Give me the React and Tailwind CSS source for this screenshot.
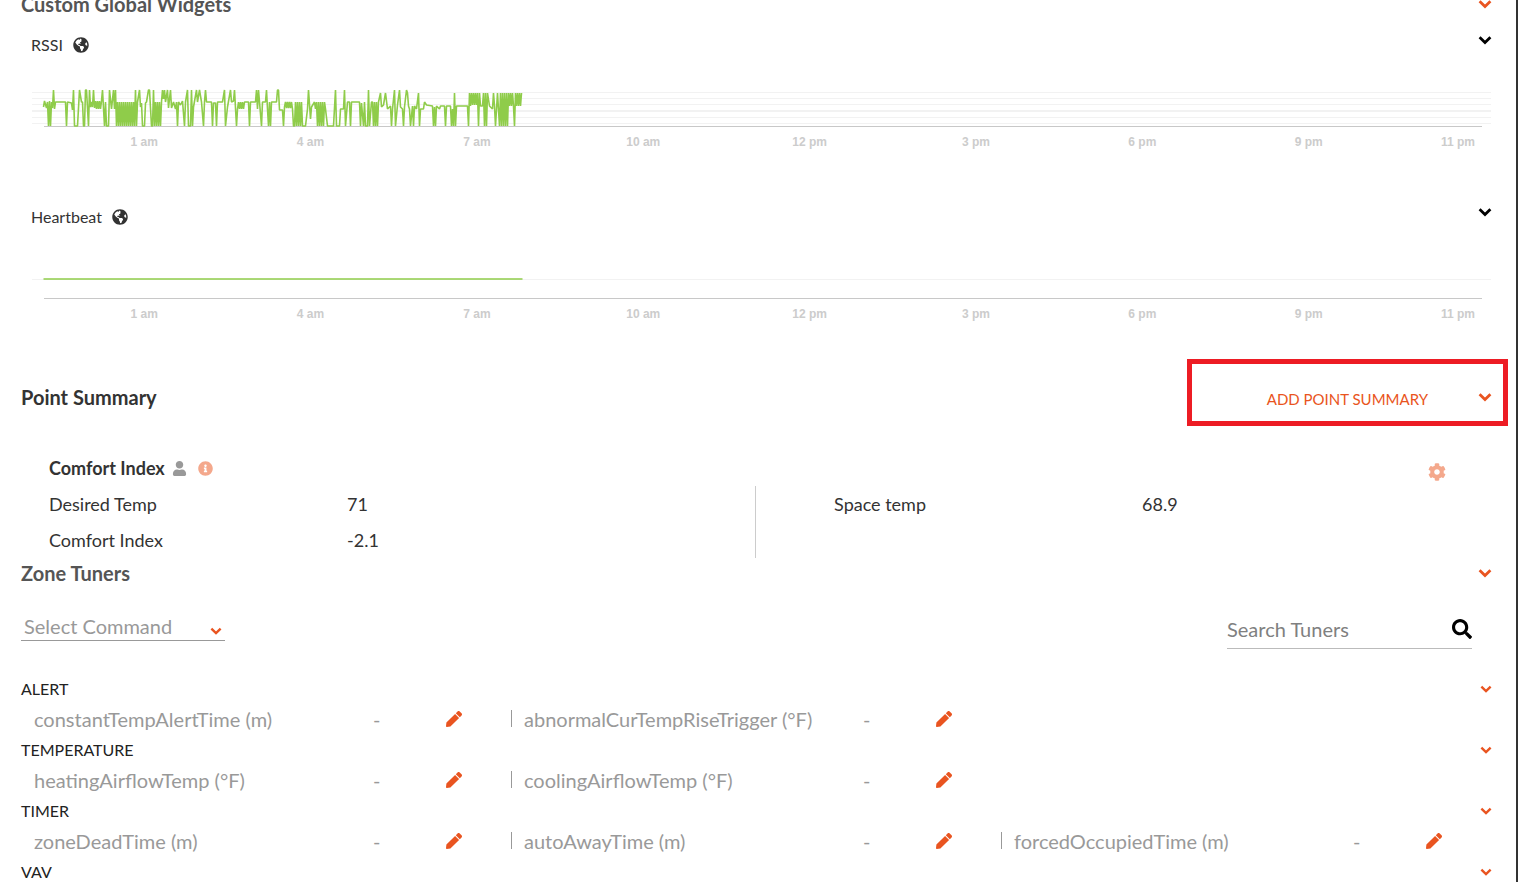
import { useState } from "react";
import {
  FaCog,
  FaGlobeAmericas,
  FaInfoCircle,
  FaPen,
  FaSearch,
  FaUser,
} from "react-icons/fa";

const HOURS = ["1 am", "4 am", "7 am", "10 am", "12 pm", "3 pm", "6 pm", "9 pm"];

// [from, to, high, low, step] is a run that swings between two levels,
// [x, y] is a single reading
const RSSI = [
  [12, 36], [13, 30], [15, 37], [16, 31], [17, 55], [18, 30], [19, 55], [20, 31], [21, 37], [22, 19], [23, 38],
  [24, 31], [33, 31], [34, 31], [35, 55], [36, 31], [40, 32], [41, 39], [42, 19], [43, 55], [46, 55], [48, 19],
  [50, 31], [51, 31], [52, 55], [53, 55], [54, 19], [55, 19], [57, 55], [58, 19], [59, 36], [60, 31], [61, 36],
  [62, 19], [63, 37], [64, 30, 70, 38, 1], [71, 19], [73, 55], [74, 31], [75, 55], [77, 55], [78, 19], [80, 38],
  [82, 19], [83, 38], [84, 19], [85, 55], [86, 31, 103, 55, 1], [104, 19], [105, 55], [106, 31], [108, 19],
  [109, 36], [110, 32], [111, 55], [113, 55], [114, 32], [115, 31], [117, 19], [118, 19], [120, 55], [121, 55],
  [122, 19], [123, 55], [124, 31, 130, 55, 1], [131, 19], [132, 28], [133, 19], [134, 31], [136, 19], [137, 37],
  [139, 19], [140, 37], [142, 31], [144, 38], [145, 31], [146, 55], [147, 31], [149, 34], [151, 30], [153, 55],
  [154, 31], [156, 19], [157, 55], [159, 55], [160, 19], [161, 55], [162, 36], [165, 19], [166, 31], [168, 19],
  [170, 31], [172, 55], [173, 31], [174, 19], [175, 31], [180, 31], [181, 55], [182, 32], [184, 32], [185, 55],
  [186, 31], [191, 31], [193, 19], [194, 55], [196, 36], [199, 19], [200, 31], [202, 30], [203, 19], [205, 55],
  [206, 38], [207, 31, 213, 38, 1], [214, 31], [217, 31], [218, 55], [219, 31], [224, 31], [225, 19], [226, 38],
  [227, 19], [228, 31], [230, 55], [231, 31], [234, 31], [235, 19], [236, 38], [237, 55], [238, 31], [239, 55],
  [240, 31], [242, 31], [243, 31], [245, 31], [246, 19], [247, 19], [248, 39], [251, 39], [252, 55], [253, 36],
  [254, 31, 260, 37, 1], [261, 38], [262, 55], [263, 55], [264, 31, 271, 55, 1], [274, 55], [276, 38], [277, 19],
  [279, 48], [280, 36], [283, 31], [284, 38], [285, 31], [286, 55], [287, 31, 292, 55, 1], [293, 31], [294, 38],
  [296, 55], [302, 55], [304, 19], [305, 55], [308, 55], [309, 38], [312, 38], [313, 19], [314, 55], [316, 31],
  [318, 31], [319, 55], [320, 31], [328, 31], [329, 55], [330, 32], [332, 55], [333, 31], [334, 55], [336, 55],
  [337, 19], [338, 55], [340, 31], [341, 31, 347, 55, 1], [349, 22], [350, 36], [352, 34], [354, 22], [356, 38],
  [359, 35], [360, 55], [361, 38], [363, 19], [364, 55], [366, 34], [368, 19], [369, 36], [371, 38], [372, 55],
  [373, 36], [375, 19], [376, 22], [377, 35], [378, 38], [379, 55], [381, 35], [382, 55], [383, 35], [385, 38],
  [387, 22], [388, 55], [389, 38], [392, 38], [393, 31], [395, 34], [401, 35], [402, 55], [403, 36], [404, 55],
  [405, 35], [408, 38], [409, 35], [413, 35], [414, 55], [415, 35], [419, 35], [420, 55], [421, 38], [422, 55],
  [423, 22], [424, 55], [425, 35], [436, 35], [437, 55], [438, 22], [439, 35], [440, 22, 446, 34, 1], [447, 55],
  [448, 22], [449, 35], [451, 35], [452, 22], [453, 55], [454, 22], [455, 55], [456, 22], [458, 35], [461, 38],
  [462, 22], [463, 35], [464, 55], [466, 22], [468, 55], [469, 22, 476, 55, 1], [477, 22, 482, 35, 1], [483, 55],
  [484, 22, 490, 35, 1],
];

const HEARTBEAT = [[12, 36], [491, 36]];

const WIDGETS = [
  { name: "RSSI", gridLines: [21, 27, 33, 39, 40, 46, 52], readings: RSSI },
  { name: "Heartbeat", gridLines: [36], readings: HEARTBEAT },
];

const TUNER_GROUPS = [
  {
    name: "ALERT",
    tuners: ["constantTempAlertTime (m)", "abnormalCurTempRiseTrigger (°F)"],
  },
  {
    name: "TEMPERATURE",
    tuners: ["heatingAirflowTemp (°F)", "coolingAirflowTemp (°F)"],
  },
  {
    name: "TIMER",
    tuners: ["zoneDeadTime (m)", "autoAwayTime (m)", "forcedOccupiedTime (m)"],
  },
  { name: "VAV", tuners: [] },
];

// readings are drawn through the middle of each pixel column
function toPoints(readings) {
  const points = [];
  readings.forEach((r) => {
    if (r.length === 2) {
      points.push(`${r[0] + 0.5},${r[1]}`);
      return;
    }
    const [from, high, to, low, step] = r;
    for (let x = from, i = 0; x <= to; x += step, i++) {
      points.push(`${x + 0.5},${i % 2 === 0 ? high : low}`);
    }
  });
  return points.join(" ");
}

function Chevron({ size = 14, className }) {
  return (
    <svg width={size} height={size} viewBox="0 0 14 14" className={className} aria-hidden="true">
      <path
        d="M1.6 4.3 7 9.5l5.4-5.2"
        fill="none"
        stroke="currentColor"
        strokeWidth="2.8"
      />
    </svg>
  );
}

function Toggle({ label, className, size = 14 }) {
  return (
    <button type="button" aria-label={`Toggle ${label}`} className={className}>
      <Chevron size={size} />
    </button>
  );
}

function Widget({ name, gridLines, readings }) {
  return (
    <section className="pl-[10px] pb-[39px]">
      <div className="flex h-[52px] items-start justify-between pt-[14px]">
        <h3 className="flex items-center gap-[10px] text-base leading-6 text-[#333]">
          {name}
          <FaGlobeAmericas size={16} />
        </h3>
        <Toggle label={name} className="text-black" />
      </div>
      <svg
        className="block h-[60px] w-full"
        viewBox="0 0 1461 60"
        preserveAspectRatio="none"
      >
        {gridLines.map((y) => (
          <rect key={y} x="1" y={y} width="1459" height="1" fill="#f2f2f2" />
        ))}
        <rect x="13" y="55" width="1438" height="1" fill="#c8c8c8" />
        <polyline
          points={toPoints(readings)}
          fill="none"
          stroke="#8fcc4a"
          strokeWidth="1.6"
          strokeLinejoin="bevel"
          vectorEffect="non-scaling-stroke"
        />
      </svg>
      <div className="flex pt-px pl-[30px] pr-[17px] text-center font-['Liberation_Sans',sans-serif] text-xs font-bold leading-5 text-[#ccc]">
        {HOURS.map((h) => (
          <span key={h} className="flex-2">
            {h}
          </span>
        ))}
        <span className="flex-1 text-right">11 pm</span>
      </div>
    </section>
  );
}

function PointSummary() {
  return (
    <section>
      <div className="relative flex h-[68px] items-center justify-between">
        <h2 className="text-xl font-bold text-[#333]">Point Summary</h2>
        <div className="flex items-center gap-[50px] text-[#e95420]">
          <button type="button" className="pt-[5px] text-[15px]">
            ADD POINT SUMMARY
          </button>
          <Toggle label="Point Summary" />
        </div>
        <div className="pointer-events-none absolute -top-1 -right-4 h-[67px] w-[321px] border-5 border-[#ed1c24]" />
      </div>

      <div className="pt-[19px] pl-7">
        <div className="flex h-9 items-center justify-between pr-[46px]">
          <h3 className="flex items-center text-lg font-bold text-[#333]">
            Comfort Index
            <FaUser size={15} className="ml-[7px] text-[#999]" />
            <FaInfoCircle size={15} className="ml-[11px] text-[#f4a88c]" />
          </h3>
          <button type="button" aria-label="Point summary settings" className="pt-[7px] text-[#f4a88c]">
            <FaCog size={18} />
          </button>
        </div>
        <div className="grid grid-cols-[49%_1fr] text-lg leading-9 text-[#333]">
          <dl className="grid grid-cols-[298px_1fr] border-r border-[#ccc]">
            <dt>Desired Temp</dt>
            <dd>71</dd>
            <dt>Comfort Index</dt>
            <dd>-2.1</dd>
          </dl>
          <dl className="grid grid-cols-[308px_1fr] content-start pl-[78px]">
            <dt>Space temp</dt>
            <dd>68.9</dd>
          </dl>
        </div>
      </div>
    </section>
  );
}

function TunerGroup({ name, tuners }) {
  return (
    <section>
      <div className="flex h-[30px] items-center justify-between">
        <h3 className="text-base text-[#222]">{name}</h3>
        <Toggle label={name} size={12} className="text-[#e95420]" />
      </div>
      <ul className="mr-px grid grid-cols-3">
        {tuners.map((t, i) => (
          <li key={t} className="flex h-[31px] items-center pb-[2px] text-xl text-[#999]">
            <span className={i > 0 ? "h-[17px] w-px bg-[#999]" : "h-[17px] w-px"} />
            <span className="flex-1 pl-3">{t}</span>
            <span className="w-[73px]">-</span>
            <button type="button" aria-label={`Edit ${t}`} className="mr-[49px] text-[#e95420]">
              <FaPen size={16} />
            </button>
          </li>
        ))}
      </ul>
    </section>
  );
}

export default function App() {
  const [search, setSearch] = useState("");
  const [command, setCommand] = useState("");

  return (
    <div className="h-screen overflow-hidden border-r-2 border-[#333] bg-white pr-6 pl-[21px] font-[Lato,sans-serif]">
      <div className="-mt-[11px] flex h-[30px] items-center justify-between">
        <h2 className="text-xl font-bold text-[#555]">Custom Global Widgets</h2>
        <Toggle label="Custom Global Widgets" className="text-[#e95420]" />
      </div>
      {WIDGETS.map((w) => (
        <Widget key={w.name} {...w} />
      ))}

      <PointSummary />

      <div className="flex h-[29px] items-center justify-between">
        <h2 className="text-xl font-bold text-[#555]">Zone Tuners</h2>
        <Toggle label="Zone Tuners" className="text-[#e95420]" />
      </div>

      <div className="flex items-start justify-between pt-[25px] pr-5 pb-[25px]">
        <div className="relative w-[204px] border-b border-[#999]">
          <select
            aria-label="Command"
            value={command}
            onChange={(e) => setCommand(e.target.value)}
            className="block h-7 w-full appearance-none bg-transparent pl-[3px] text-xl leading-7 text-[#999] outline-none"
          >
            <option value="">Select Command</option>
          </select>
          <Chevron size={12} className="pointer-events-none absolute right-[3px] bottom-[3px] text-[#e95420]" />
        </div>
        <div className="flex h-[37px] w-[245px] items-center border-b border-[#bbb] pb-[2px]">
          <input
            type="text"
            aria-label="Search Tuners"
            placeholder="Search Tuners"
            value={search}
            onChange={(e) => setSearch(e.target.value)}
            className="w-full min-w-0 flex-1 text-xl text-[#333] outline-none placeholder:text-[#808080]"
          />
          <button type="button" aria-label="Search" className="text-black">
            <FaSearch size={20} />
          </button>
        </div>
      </div>

      {TUNER_GROUPS.map((g) => (
        <TunerGroup key={g.name} {...g} />
      ))}
    </div>
  );
}
